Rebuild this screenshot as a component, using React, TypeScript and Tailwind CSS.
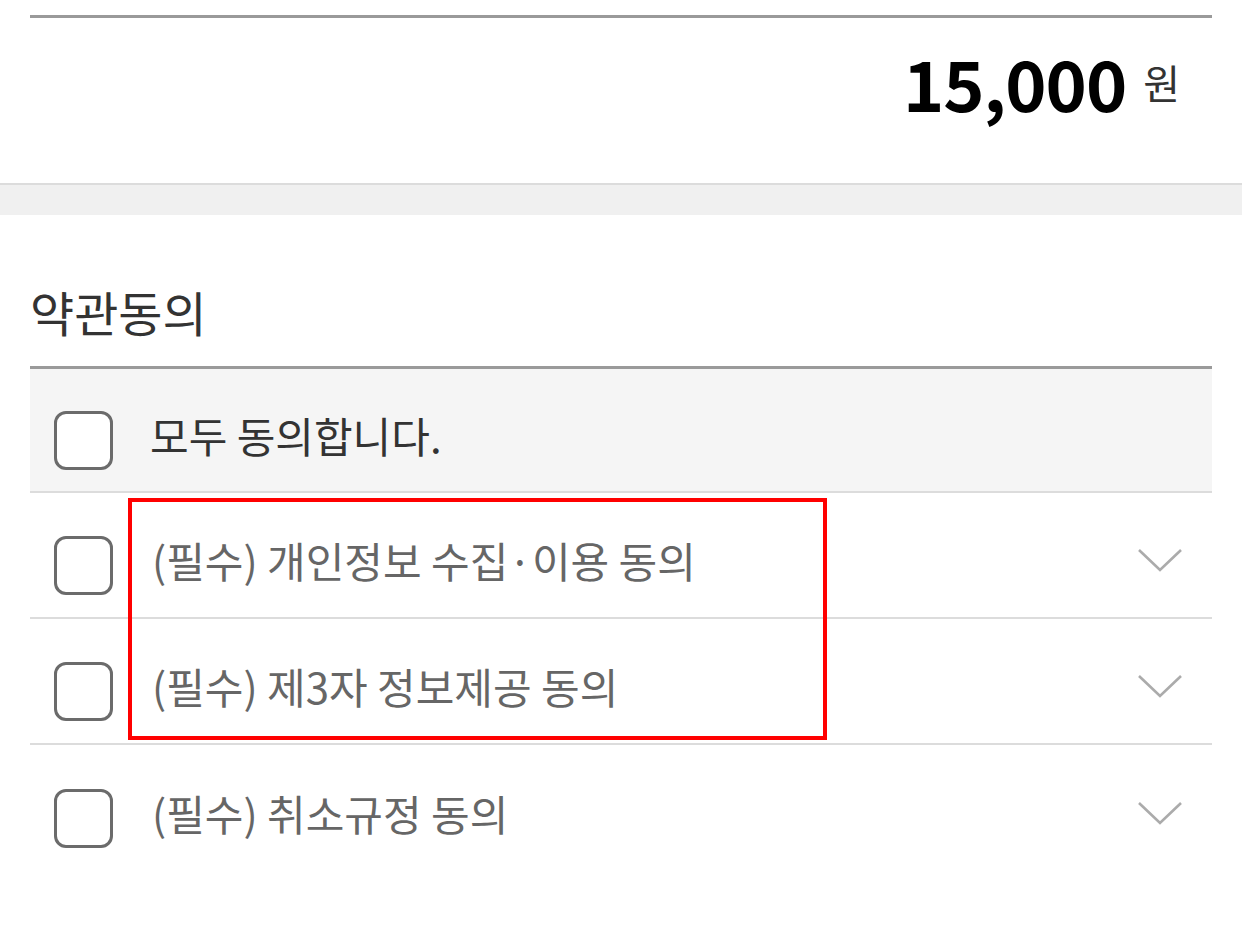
import { ReactNode } from 'react';

const font = { fontFamily: '"Noto Sans CJK KR", "Noto Sans", sans-serif' };

const terms = [
  { label: '(필수) 개인정보 수집·이용 동의' },
  { label: '(필수) 제3자 정보제공 동의' },
  { label: '(필수) 취소규정 동의' },
];

const Checkbox = () => (
  <span className="block h-[59px] w-[59px] shrink-0 rounded-[12px] border-[3px] border-[#6b6b6b] bg-white" />
);

const Chevron = () => (
  <svg className="mb-[10px]" width="48" height="28" viewBox="0 0 48 28" fill="none" aria-hidden="true">
    <polyline points="3,4 24,24 45,4" stroke="#ababab" strokeWidth="2.6" />
  </svg>
);

const Row = ({ children, className }: { children: ReactNode; className?: string }) => (
  <div className={`flex items-center pt-[20px] pl-[24px] pr-[28px] ${className ?? ''}`}>{children}</div>
);

export default function App() {
  return (
    <div className="relative w-[1242px] bg-white text-[#333]" style={font}>
      {/* total price */}
      <div className="pt-[15px]">
        <div className="mx-[30px] border-t-[3px] border-[#9a9a9a]" />
        <div className="mx-[30px] flex h-[165px] items-center justify-end pr-[32px] pb-[38px]">
          <span className="text-[70px] font-bold leading-none tracking-[-1px] text-black">15,000</span>
          <span className="ml-[17px] text-[40px] leading-none text-[#333]">원</span>
        </div>
      </div>

      <div className="h-[32px] border-t-[2px] border-[#dcdcdc] bg-[#f0f0f0]" />

      {/* terms */}
      <div className="px-[30px]">
        <h2 className="flex h-[151px] items-center pt-[40px] text-[48px] font-normal leading-none text-[#333]">약관동의</h2>

        <div className="border-t-[3px] border-[#9a9a9a]">
          <Row className="h-[124px] border-b-[2px] border-[#dcdcdc] bg-[#f5f5f5]">
            <Checkbox />
            <span className="mb-[10px] ml-[37px] text-[42px] leading-none text-[#333]">모두 동의합니다.</span>
          </Row>
          {terms.map((t, i) => (
            <Row key={t.label} className={i < terms.length - 1 ? 'h-[126px] border-b-[2px] border-[#dcdcdc]' : 'h-[126px]'}>
              <Checkbox />
              <span className="mb-[10px] ml-[39px] flex-1 text-[42px] leading-none text-[#666]">{t.label}</span>
              <Chevron />
            </Row>
          ))}
        </div>
      </div>

      {/* highlight annotation */}
      <div className="pointer-events-none absolute left-[128px] top-[498px] h-[242px] w-[699px] border-[4px] border-[#ff0000]" />

      <div className="h-[80px]" />
    </div>
  );
}
